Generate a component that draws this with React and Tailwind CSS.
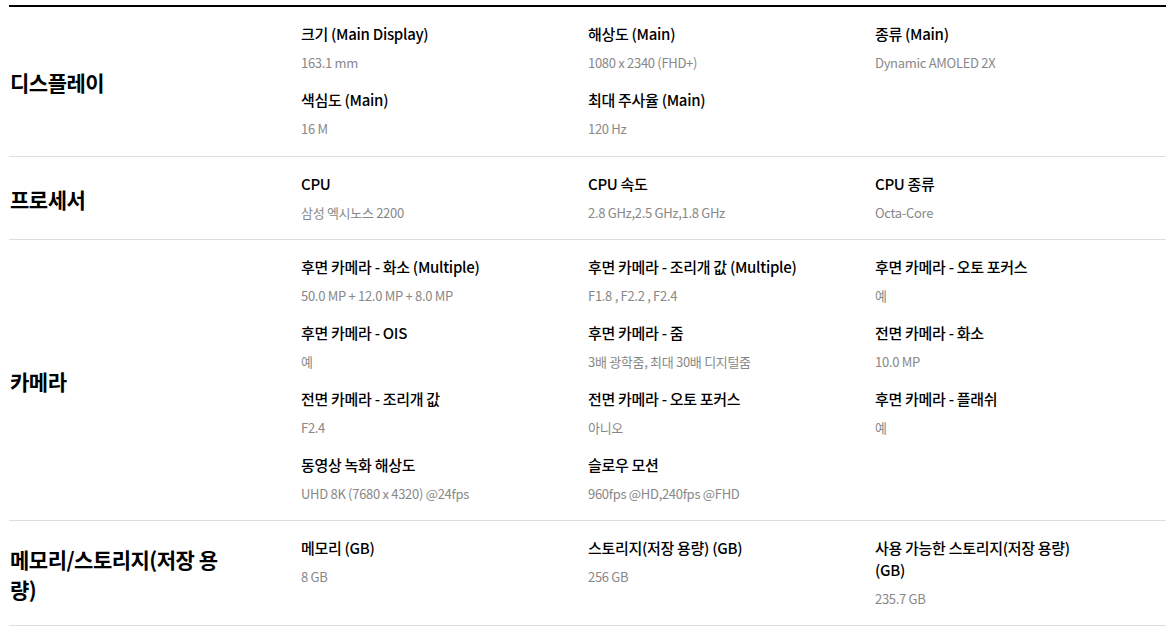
const specs = [
  {
    label: '디스플레이',
    items: [
      { t: '크기 (Main Display)', v: '163.1 mm' },
      { t: '해상도 (Main)', v: '1080 x 2340 (FHD+)' },
      { t: '종류 (Main)', v: 'Dynamic AMOLED 2X' },
      { t: '색심도 (Main)', v: '16 M' },
      { t: '최대 주사율 (Main)', v: '120 Hz' },
    ],
  },
  {
    label: '프로세서',
    items: [
      { t: 'CPU', v: '삼성 엑시노스 2200' },
      { t: 'CPU 속도', v: '2.8 GHz,2.5 GHz,1.8 GHz' },
      { t: 'CPU 종류', v: 'Octa-Core' },
    ],
  },
  {
    label: '카메라',
    items: [
      { t: '후면 카메라 - 화소 (Multiple)', v: '50.0 MP + 12.0 MP + 8.0 MP' },
      { t: '후면 카메라 - 조리개 값 (Multiple)', v: 'F1.8 , F2.2 , F2.4' },
      { t: '후면 카메라 - 오토 포커스', v: '예' },
      { t: '후면 카메라 - OIS', v: '예' },
      { t: '후면 카메라 - 줌', v: '3배 광학줌, 최대 30배 디지털줌' },
      { t: '전면 카메라 - 화소', v: '10.0 MP' },
      { t: '전면 카메라 - 조리개 값', v: 'F2.4' },
      { t: '전면 카메라 - 오토 포커스', v: '아니오' },
      { t: '후면 카메라 - 플래쉬', v: '예' },
      { t: '동영상 녹화 해상도', v: 'UHD 8K (7680 x 4320) @24fps' },
      { t: '슬로우 모션', v: '960fps @HD,240fps @FHD' },
    ],
  },
  {
    label: '메모리/스토리지(저장 용량)',
    items: [
      { t: '메모리 (GB)', v: '8 GB' },
      { t: '스토리지(저장 용량) (GB)', v: '256 GB' },
      { t: '사용 가능한 스토리지(저장 용량) (GB)', v: '235.7 GB' },
    ],
  },
]

// 스펙 항목 (제목 + 값)
function SpecItem({ t, v }) {
  return (
    <div className="w-[220px]">
      <p className="text-[15px] leading-[22px] font-medium text-black tracking-[-0.3px]">{t}</p>
      <p className="mt-[7px] text-[13px] leading-[22px] text-[#888] tracking-[-0.3px]">{v}</p>
    </div>
  )
}

export default function App() {
  return (
    <div
      className="bg-white min-h-[634px] pt-[5px] pl-[9px] pr-[7px]"
      style={{ fontFamily: '"Noto Sans CJK KR", "Noto Sans", sans-serif' }}
    >
      <div className="border-t-2 border-black">
        {specs.map((s) => (
          <div key={s.label} className="flex items-center border-b border-[#ddd] pt-[16px] pb-[15px] first:pb-[16px]">
            <h3 className="w-[292px] shrink-0 pl-[1px] pr-[60px] text-[21px] leading-[30px] font-bold text-black tracking-[-0.5px]">
              {s.label}
            </h3>
            <div className="grid grid-cols-[287px_287px_287px] gap-y-[15px]">
              {s.items.map((it) => (
                <SpecItem key={it.t} {...it} />
              ))}
            </div>
          </div>
        ))}
      </div>
    </div>
  )
}
